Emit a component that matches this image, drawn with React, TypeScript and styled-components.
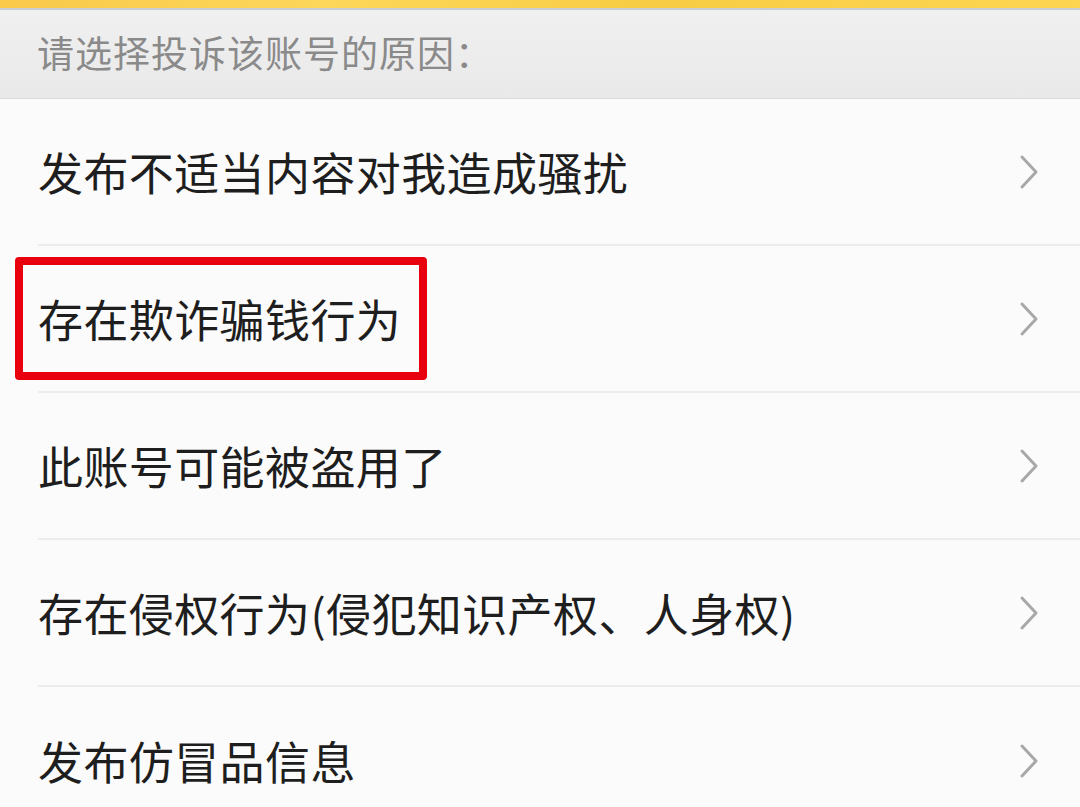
import styled, { createGlobalStyle } from "styled-components";

const GlobalStyle = createGlobalStyle`
  html, body {
    margin: 0;
    padding: 0;
    background: #fbfbfb;
  }
  body {
    font-family: "Noto Sans CJK SC", "Noto Sans", sans-serif;
    overflow: hidden;
  }
`;

const reasons = [
  "发布不适当内容对我造成骚扰",
  "存在欺诈骗钱行为",
  "此账号可能被盗用了",
  "存在侵权行为(侵犯知识产权、人身权)",
  "发布仿冒品信息",
];

function Chevron() {
  return (
    <svg width="22" height="36" viewBox="0 0 22 36">
      <polyline
        points="4,3 18,18 4,33"
        fill="none"
        stroke="#a8a8a8"
        strokeWidth="3"
        strokeLinecap="round"
        strokeLinejoin="round"
      />
    </svg>
  );
}

function App() {
  return (
    <>
      <GlobalStyle />
      <Page>
        <TopBar />
        <Header>请选择投诉该账号的原因：</Header>
        <List>
          {reasons.map((item, index) => (
            <Row key={index} $last={index === reasons.length - 1}>
              <Label>{item}</Label>
              <Chevron />
              {index === 1 && <Highlight />}
            </Row>
          ))}
        </List>
      </Page>
    </>
  );
}
export default App;

const Page = styled.div`
  width: 1080px;
  height: 807px;
  display: flex;
  flex-direction: column;
  background: #fbfbfb;
  overflow: hidden;
`;

const TopBar = styled.div`
  flex-shrink: 0;
  height: 8px;
  background: linear-gradient(90deg, #f9c94a, #fdd75a 30%, #f8cd45 60%, #fdd550);
  border-bottom: 2px solid #c9ccd3;
`;

const Header = styled.div`
  flex-shrink: 0;
  height: 89px;
  display: flex;
  align-items: center;
  padding: 0 0 4px 37px;
  box-sizing: border-box;
  background: linear-gradient(180deg, #f1f0f1, #e9e9e9);
  border-bottom: 1px solid #dcdcdc;
  color: #8a8a8a;
  font-size: 37px;
  letter-spacing: 1px;
`;

const List = styled.div`
  flex-shrink: 0;
  display: flex;
  flex-direction: column;
`;

const Row = styled.div<{ $last: boolean }>`
  position: relative;
  flex-shrink: 0;
  height: 147px;
  margin-left: 38px;
  padding-right: 40px;
  display: flex;
  align-items: center;
  justify-content: space-between;
  border-bottom: ${(p) => (p.$last ? "none" : "2px solid #ececec")};
  box-sizing: border-box;
`;

const Label = styled.div`
  color: #1e1e1e;
  font-size: 45px;
  line-height: 1;
  letter-spacing: 0.4px;
`;

const Highlight = styled.div`
  position: absolute;
  left: -23px;
  top: 11px;
  width: 412px;
  height: 123px;
  border: 8px solid #e8000e;
  border-radius: 4px;
  box-sizing: border-box;
`;
